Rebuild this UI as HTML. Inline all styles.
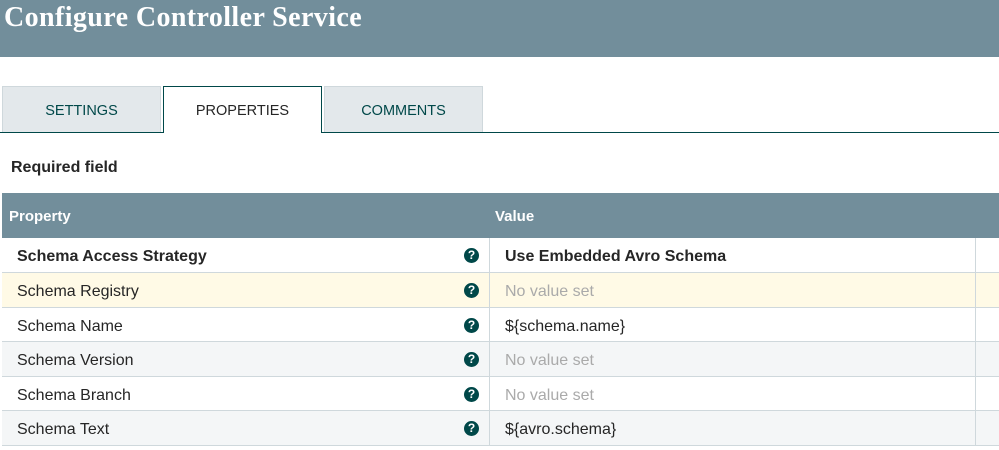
<!DOCTYPE html>
<html><head><style>
body{margin:0;width:999px;height:450px;overflow:hidden;background:#fff;font-family:"Liberation Sans",sans-serif;position:relative}
.hdr{position:absolute;left:0;top:0;width:999px;height:57px;background:#728e9b}
.hdr h1{margin:0;position:absolute;left:4px;top:2px;font-family:"Liberation Serif",serif;font-weight:bold;font-size:28px;letter-spacing:0.4px;color:#fff}
.tab{position:absolute;top:86px;height:46px;width:159px;background:#e3e8eb;border:1px solid #cfd8dc;border-bottom:none;box-sizing:border-box;text-align:center;line-height:48px;font-size:14.5px;color:#004849}
.tab.act{background:#fff;border:1px solid #004849;border-bottom:none;height:47px;color:#262626}
.line{position:absolute;left:322px;top:132px;width:677px;height:1px;background:#004849}
.line2{position:absolute;left:0;top:132px;width:163px;height:1px;background:#004849}
.req{position:absolute;left:11px;top:159px;font-weight:bold;font-size:16px;color:#262626}
.th{position:absolute;left:2px;top:193px;width:997px;height:45px;background:#728e9b;color:#fff;font-weight:bold;font-size:15px}
.th span{position:absolute;top:15px}
.row{position:absolute;left:2px;width:997px;height:34px;border-bottom:1px solid #cfd8dc;box-sizing:border-box;font-size:16px;color:#262626}
.row .p{position:absolute;left:15px;top:10px}
.row .v{position:absolute;left:503px;top:10px}
.row .d1{position:absolute;left:487px;top:0;bottom:0;width:1px;background:#cfd8dc}
.row .d2{position:absolute;left:973px;top:0;bottom:0;width:1px;background:#cfd8dc}
.row .q{position:absolute;left:462px;top:10px;width:15px;height:15px;border-radius:50%;background:#004849;color:#fff;font-size:12px;font-weight:bold;text-align:center;line-height:15px}
.nv{color:#aaa}
</style></head><body>
<div class="hdr"><h1>Configure Controller Service</h1></div>
<div class="tab" style="left:2px">SETTINGS</div>
<div class="tab act" style="left:163px">PROPERTIES</div>
<div class="tab" style="left:324px">COMMENTS</div>
<div class="line"></div><div class="line2"></div>
<div class="req">Required field</div>
<div class="th"><span style="left:7px">Property</span><span style="left:493px">Value</span></div>
<div class="row" style="top:238px;height:35px;background:#fff"><span class="p" style="font-weight:bold">Schema Access Strategy</span><span class="q">?</span><div class="d1"></div><span class="v" style="font-weight:bold">Use Embedded Avro Schema</span><div class="d2"></div></div>
<div class="row" style="top:273px;height:35px;background:#fffae6"><span class="p">Schema Registry</span><span class="q">?</span><div class="d1"></div><span class="v nv">No value set</span><div class="d2"></div></div>
<div class="row" style="top:308px;background:#fff"><span class="p">Schema Name</span><span class="q">?</span><div class="d1"></div><span class="v">${schema.name}</span><div class="d2"></div></div>
<div class="row" style="top:342px;height:35px;background:#f4f6f7"><span class="p">Schema Version</span><span class="q">?</span><div class="d1"></div><span class="v nv">No value set</span><div class="d2"></div></div>
<div class="row" style="top:377px;background:#fff"><span class="p">Schema Branch</span><span class="q">?</span><div class="d1"></div><span class="v nv">No value set</span><div class="d2"></div></div>
<div class="row" style="top:411px;height:35px;background:#f4f6f7"><span class="p">Schema Text</span><span class="q">?</span><div class="d1"></div><span class="v">${avro.schema}</span><div class="d2"></div></div>
</body></html>
